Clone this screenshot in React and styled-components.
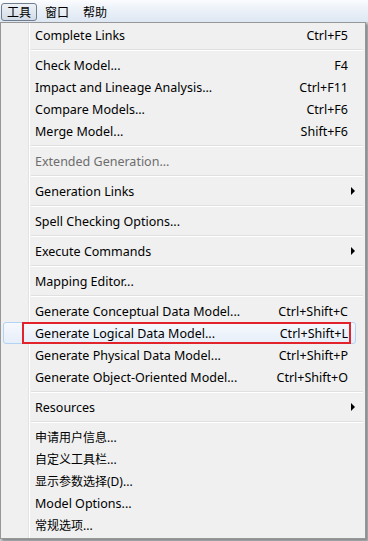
import React from "react";
import styled, { createGlobalStyle } from "styled-components";

const GlobalStyle = createGlobalStyle`
  html, body { margin: 0; padding: 0; }
  body {
    background: #b9c3c6;
    font-family: "Noto Sans", "Noto Sans CJK SC", sans-serif;
    font-size: 12px;
    color: #000;
  }
`;

const Page = styled.div`
  width: 368px;
  height: 541px;
  overflow: hidden;
  display: flex;
  flex-direction: column;
  background: #c9cfd2;
`;

const MenuBar = styled.div`
  height: 22px;
  box-sizing: border-box;
  display: flex;
  align-items: center;
  gap: 2px;
  padding-left: 1px;
  background: linear-gradient(#fbfcfe 0%, #eef3f9 35%, #dde7f3 100%);
  flex-shrink: 0;
`;

const BarItem = styled.div`
  width: 36px;
  height: 18px;
  box-sizing: border-box;
  display: flex;
  align-items: center;
  justify-content: center;
  font-family: "Noto Sans CJK SC", sans-serif;
  font-size: 12px;
  line-height: 1;
  border: 1px solid ${(p) => (p.$active ? "#6f7d8c" : "transparent")};
  border-radius: 3px;
  background: ${(p) =>
    p.$active ? "linear-gradient(#eef2f7, #d3dce7)" : "transparent"};
  margin-top: 2px;
`;

const Dropdown = styled.div`
  width: 366px;
  box-sizing: border-box;
  border: 1px solid #979797;
  background:
    linear-gradient(to right, transparent 27px, #e2e3e3 27px, #e2e3e3 28px, #ffffff 28px, #ffffff 29px, transparent 29px),
    #f0f0f0;
  padding: 1px 2px 2px 2px;
  box-shadow: 2px 2px 2px rgba(60, 60, 60, 0.45);
  display: flex;
  flex-direction: column;
`;

const Row = styled.div`
  position: relative;
  height: 22px;
  box-sizing: border-box;
  display: flex;
  align-items: center;
  padding-left: 32px;
  padding-right: 15px;
  font-size: 12.5px;
  color: ${(p) => (p.$disabled ? "#6d6d6d" : "#000")};
  white-space: nowrap;
  ${(p) =>
    p.$hover &&
    `
    &::before {
      content: "";
      position: absolute;
      left: 0;
      top: 0;
      right: 7px;
      bottom: 0;
      border: 1px solid #b4d2f3;
      border-radius: 3px;
      background: linear-gradient(#f6f9fd, #e6eef9);
    }
  `}
`;

const Label = styled.span`
  position: relative;
  flex: 1;
  font-size: ${(p) => (p.$cjk ? "12px" : "inherit")};
`;

const Shortcut = styled.span`
  position: relative;
  text-align: right;
`;

const Arrow = styled.span`
  position: absolute;
  right: 8px;
  top: 7px;
  width: 0;
  height: 0;
  border-top: 4px solid transparent;
  border-bottom: 4px solid transparent;
  border-left: 4px solid #000;
`;

const RedBox = styled.div`
  position: absolute;
  left: 19px;
  top: 0;
  width: 329px;
  height: 22px;
  box-sizing: border-box;
  border: 2px solid #e2232b;
  pointer-events: none;
`;

const Separator = styled.div`
  height: 8px;
  display: flex;
  align-items: center;
  padding-left: 28px;
  &::after {
    content: "";
    flex: 1;
    height: 0;
    border-top: 1px solid #e0e0e0;
    border-bottom: 1px solid #ffffff;
  }
`;

const groups = [
  [{ label: "Complete Links", sc: "Ctrl+F5" }],
  [
    { label: "Check Model...", sc: "F4" },
    { label: "Impact and Lineage Analysis...", sc: "Ctrl+F11" },
    { label: "Compare Models...", sc: "Ctrl+F6" },
    { label: "Merge Model...", sc: "Shift+F6" },
  ],
  [{ label: "Extended Generation...", disabled: true }],
  [{ label: "Generation Links", sub: true }],
  [{ label: "Spell Checking Options..." }],
  [{ label: "Execute Commands", sub: true }],
  [{ label: "Mapping Editor..." }],
  [
    { label: "Generate Conceptual Data Model...", sc: "Ctrl+Shift+C" },
    { label: "Generate Logical Data Model...", sc: "Ctrl+Shift+L", hover: true },
    { label: "Generate Physical Data Model...", sc: "Ctrl+Shift+P" },
    { label: "Generate Object-Oriented Model...", sc: "Ctrl+Shift+O" },
  ],
  [{ label: "Resources", sub: true }],
  [
    { label: "申请用户信息...", cjk: true },
    { label: "自定义工具栏...", cjk: true },
    { label: "显示参数选择(D)...", cjk: true },
    { label: "Model Options..." },
    { label: "常规选项...", cjk: true },
  ],
];

export default function App() {
  return (
    <>
      <GlobalStyle />
      <Page>
        <MenuBar>
          <BarItem $active>工具</BarItem>
          <BarItem>窗口</BarItem>
          <BarItem>帮助</BarItem>
        </MenuBar>
        <Dropdown>
          {groups.map((g, gi) => (
            <React.Fragment key={gi}>
              {gi > 0 && <Separator />}
              {g.map((it) => (
                <Row key={it.label} $disabled={it.disabled} $hover={it.hover}>
                  <Label $cjk={it.cjk}>{it.label}</Label>
                  {it.sc && <Shortcut>{it.sc}</Shortcut>}
                  {it.sub && <Arrow />}
                  {it.hover && <RedBox />}
                </Row>
              ))}
            </React.Fragment>
          ))}
        </Dropdown>
      </Page>
    </>
  );
}
